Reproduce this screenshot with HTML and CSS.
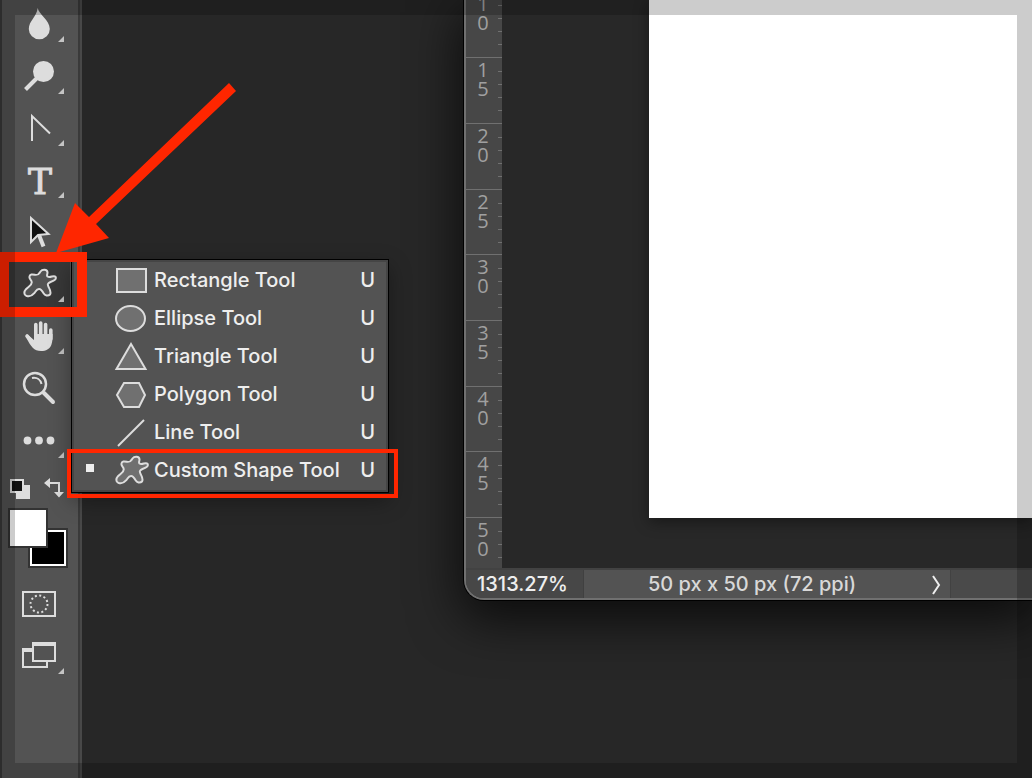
FILE: index.html
```html
<!DOCTYPE html>
<html lang="en">

<head>
  <meta charset="UTF-8">
  <title>Custom Shape Tool</title>
  <link rel="stylesheet" href="styles.css">
</head>

<body>
  <svg class="defs" aria-hidden="true">
    <symbol id="blob" viewBox="0 0 36 30">
      <path d="M18.500 3.500C20.300 1 25.200 1 25.500 4.300C25.600 6.800 23.800 8 26.300 8.900C29 9.600 32 6.800 33.600 8.900C34.800 11.600 31.500 12.900 28.500 14C25.500 15.200 25.300 16.500 26.600 19C28.200 22 29.500 24.200 28 26.500C26 28.500 23 27.600 21.600 25.200C20 22.300 19 20.800 17 20.900C14.500 21.100 14 23.200 12.300 25.200C10.200 27.600 6.800 28.900 4.300 27.800C1.500 26.500 2 23.500 4 21.200C6.500 18.500 10 17.500 9.700 14.200C9.500 11.800 7.300 11.300 7.400 9C7.500 6 10.500 6.200 12.800 6.700C16.500 7.500 16.800 5.800 18.500 3.500Z" />
    </symbol>
  </svg>

  <div class="workspace">
    <nav class="toolbar">
      <button class="tool more" aria-label="Blur">
        <svg viewBox="2 0 76 52"><path class="fill" d="M37.700 10C38.500 16 49.800 22 49.800 31A10.500 10.300 0 0 1 28.800 31C28.800 23 36.500 19 37.700 10Z" /></svg>
      </button>
      <button class="tool more" aria-label="Dodge">
        <svg viewBox="2 0 76 52"><circle class="fill" cx="43.500" cy="21.500" r="10.500" /><path class="line" stroke-width="4" d="M38 27L25.500 39.500" /></svg>
      </button>
      <button class="tool more" aria-label="Pen">
        <svg viewBox="2 0 76 52"><path class="line" stroke-width="2" d="M32 39V14L50 31.500" /></svg>
      </button>
      <button class="tool more" aria-label="Type">
        <svg viewBox="2 0 76 52"><text class="fill letter" x="40" y="40">T</text></svg>
      </button>
      <button class="tool more" aria-label="Path Selection">
        <svg viewBox="2 0 76 52"><path class="line" stroke-width="4" d="M39 29L43.500 40.500" /><path class="line" stroke-width="2" fill="#111" d="M31 12V36L38 29L48.500 28Z" /></svg>
      </button>
      <button class="tool more active" aria-label="Custom Shape">
        <svg viewBox="2 0 76 52"><use class="shape" href="#blob" x="22" y="10" width="36" height="30" /></svg>
      </button>
      <button class="tool more" aria-label="Hand">
        <svg viewBox="2 0 76 52">
          <path class="line round" stroke-width="3.600" d="M35.800 27V14.500M40.700 26V13M45.600 27V14.500M50.800 29V20M27 26L33 33" />
          <path class="fill" d="M34 24H52.600C52.600 33 52 41 41 41C34 41 31 37 26 27L28 25L34 30Z" />
        </svg>
      </button>
      <button class="tool" aria-label="Zoom">
        <svg viewBox="2 0 76 52"><circle class="line" stroke-width="2.500" cx="35" cy="22" r="11" /><path class="line" stroke-width="2" d="M32 16C37 15 40.500 18 41.500 22" /><path class="line round" stroke-width="4" d="M44 31L53 40" /></svg>
      </button>
      <button class="tool more" aria-label="Edit Toolbar">
        <svg viewBox="2 0 76 52"><circle class="fill" cx="27.500" cy="26.500" r="3.900" /><circle class="fill" cx="39" cy="26.500" r="3.900" /><circle class="fill" cx="50.500" cy="26.500" r="3.900" /></svg>
      </button>

      <div class="colors">
        <button class="mini" aria-label="Default colors">
          <svg viewBox="0 0 20 20"><path class="fill" d="M6 6H20V20H6Z" /><path fill="#111" stroke="#ddd" stroke-width="2" d="M1 1H13V13H1Z" /></svg>
        </button>
        <button class="mini" aria-label="Switch colors">
          <svg viewBox="0 0 20 20"><path class="line" stroke-width="2" d="M5 4H15V14" /><path class="fill" d="M0 4L6 -1V9ZM10 13H20L15 18.500Z" /></svg>
        </button>
      </div>
      <div class="swatches">
        <button class="swatch back" aria-label="Background color"></button>
        <button class="swatch front" aria-label="Foreground color"></button>
      </div>

      <button class="tool" aria-label="Quick Mask">
        <svg viewBox="2 0 76 52"><path class="line" stroke-width="2" d="M23 14H55V38H23Z" /><circle class="line" stroke-width="2" stroke-dasharray="2 2.450" cx="39" cy="26" r="8.500" /></svg>
      </button>
      <button class="tool more" aria-label="Screen Mode">
        <svg viewBox="2 0 76 52"><path class="line" stroke-width="2" d="M33 19H23V37H47V32" /><path class="fill" d="M22 18H33V22H22Z" /><path class="line" stroke-width="2" d="M33 13H55V31H33Z" /><path class="fill" d="M32 12H56V16H32Z" /></svg>
      </button>
    </nav>

    <main class="desk">
      <section class="document">
        <div class="view">
          <ol class="ruler">
            <li>1<br>0</li>
            <li>1<br>5</li>
            <li>2<br>0</li>
            <li>2<br>5</li>
            <li>3<br>0</li>
            <li>3<br>5</li>
            <li>4<br>0</li>
            <li>4<br>5</li>
            <li>5<br>0</li>
          </ol>
          <div class="canvas">
            <div class="artboard"></div>
          </div>
        </div>
        <footer class="status">
          <span class="percent">1313.27%</span>
          <button class="info">
            <span>50 px x 50 px (72 ppi)</span>
            <svg class="chevron" viewBox="0 0 10 20"><path d="M2 2L8 11L2 20" /></svg>
          </button>
        </footer>
      </section>
    </main>

    <div class="menu" role="menu">
      <button class="item" role="menuitem">
        <svg class="icon" viewBox="0 0 36 30"><path class="shape" d="M3 4H32V27H3Z" /></svg>
        <span>Rectangle Tool</span><kbd>U</kbd>
      </button>
      <button class="item" role="menuitem">
        <svg class="icon" viewBox="0 0 36 30"><ellipse class="shape" cx="16.500" cy="15.500" rx="14.500" ry="12.500" /></svg>
        <span>Ellipse Tool</span><kbd>U</kbd>
      </button>
      <button class="item" role="menuitem">
        <svg class="icon" viewBox="0 0 36 30"><path class="shape" d="M17 3L31.500 28H2.500Z" /></svg>
        <span>Triangle Tool</span><kbd>U</kbd>
      </button>
      <button class="item" role="menuitem">
        <svg class="icon" viewBox="0 0 36 30"><path class="shape" d="M10 4H25L31 16L25 28H10L3 16Z" /></svg>
        <span>Polygon Tool</span><kbd>U</kbd>
      </button>
      <button class="item" role="menuitem">
        <svg class="icon" viewBox="0 0 36 30"><path class="shape" d="M4 29L30 3" /></svg>
        <span>Line Tool</span><kbd>U</kbd>
      </button>
      <button class="item current" role="menuitem">
        <svg class="icon" viewBox="0 0 36 30"><use class="shape" href="#blob" width="36" height="30" /></svg>
        <span>Custom Shape Tool</span><kbd>U</kbd>
      </button>
    </div>

    <!-- callouts -->
    <div class="mark mark-tool"></div>
    <div class="mark mark-item"></div>
    <svg class="arrow" viewBox="0 0 184 172"><path d="M174 2L181 10L41 143L54 157L1 172L20 122L34 136Z" /></svg>
  </div>
</body>

</html>
```

FILE: styles.css
```css
* {
  box-sizing: border-box;
}

body {
  margin: 0;
  background: #272727;
  color: #eee;
  font: 500 20px/24px Inter, "Liberation Sans", sans-serif;
  overflow: hidden;
}

button {
  padding: 0;
  border: none;
  background: none;
  color: inherit;
  font: inherit;
}

svg {
  display: block;
}

.defs {
  position: absolute;
  width: 0;
  height: 0;
}

.workspace {
  display: flex;
  position: relative;
  height: 100vh;
  overflow: hidden;
}

/* darker band round the edge of the screen */
.workspace::after {
  content: "";
  position: absolute;
  inset: 0;
  border: 15px solid rgba(0, 0, 0, 0.2);
  pointer-events: none;
}

/* toolbar */
.toolbar {
  display: flex;
  flex-direction: column;
  flex: none;
  width: 82px;
  margin-top: -2px;
  background: #535353;
  border-left: 2px solid #393939;
  border-right: 2px solid #484848;
  box-shadow: inset -2px 0 #3a3a3a;
}

.tool {
  position: relative;
  width: 76px;
  height: 52px;
}

.tool svg {
  width: 76px;
  height: 52px;
}

.tool.more::after {
  content: "";
  position: absolute;
  left: 56px;
  top: 38px;
  border: 3px solid transparent;
  border-right-color: #c4c4c4;
  border-bottom-color: #c4c4c4;
}

.active {
  background: linear-gradient(#383838, #383838) 0 4px / 68px 45px no-repeat;
}

.fill {
  fill: #ddd;
}

.line {
  fill: none;
  stroke: #ddd;
}

path[fill="#111"] {
  fill: #111;
}

.round {
  stroke-linecap: round;
}

.letter {
  font: 36px "DejaVu Serif", serif;
  text-anchor: middle;
  stroke: #ddd;
  stroke-width: 1;
}

.shape {
  fill: #707070;
  stroke: #ddd;
  stroke-width: 2;
}

.active .shape {
  fill: #535353;
}

.colors {
  display: flex;
  gap: 14px;
  padding: 13px 8px 9px;
}

.mini,
.mini svg {
  width: 20px;
  height: 20px;
  overflow: visible;
}

.swatches {
  position: relative;
  width: 60px;
  height: 60px;
  margin: 0 0 10px 6px;
}

.swatch {
  position: absolute;
  width: 40px;
  height: 40px;
  border: 2px solid #333;
}

.front {
  top: 0;
  left: 0;
  background: #fff;
}

.back {
  right: 0;
  bottom: 0;
  background: #000;
  box-shadow: inset 0 0 0 2px #fff;
}

/* document window */
.desk {
  flex: 1;
  padding-left: 382px;
}

.document {
  height: 600px;
  border: 2px solid #707070;
  border-width: 0 0 2px 2px;
  border-bottom-left-radius: 20px;
  background: #474747;
  box-shadow: 0 0 0 1px #000, 0 16px 50px 4px rgba(0, 0, 0, 0.7);
  overflow: hidden;
}

.view {
  display: flex;
  height: 568px;
  overflow: hidden;
}

.ruler {
  flex: none;
  width: 36px;
  margin: -9px 0 0;
  padding: 0;
  list-style: none;
  color: #a0a0a0;
  font: 20px/19px "Open Sans", sans-serif;
  text-align: center;
}

.ruler li {
  position: relative;
  height: 66px;
  padding-top: 2px;
  padding-right: 2px;
  border-top: 1px solid #707070;
}

.ruler li:nth-child(3n+4) {
  height: 65px;
}

.ruler li::after {
  content: "";
  position: absolute;
  top: 1px;
  right: 0;
  width: 4px;
  height: 52px;
  background: repeating-linear-gradient(transparent 0 12px, #707070 12px 13px);
}

.canvas {
  flex: 1;
  padding: 0 0 50px 147px;
  background: #282828;
}

.artboard {
  height: 518px;
  background: #fff;
  box-shadow: 0 4px 14px rgba(0, 0, 0, 0.4);
}

.status {
  display: flex;
  height: 30px;
  border-top: 2px solid #424242;
  background: #4a4a4a;
}

.percent {
  width: 118px;
  padding: 2px 0 0 11px;
  background: #474747;
  border-right: 1px solid #404040;
}

.info {
  display: flex;
  align-items: center;
  justify-content: space-between;
  width: 367px;
  padding: 0 9px 0 64px;
  background: #535353;
  border-right: 1px solid #424242;
  color: #d8d8d8;
}

.chevron {
  width: 10px;
  height: 20px;
  fill: none;
  stroke: #eee;
  stroke-width: 2;
  overflow: visible;
}

/* flyout menu */
.menu {
  position: absolute;
  left: 71px;
  top: 259px;
  width: 318px;
  padding: 2px;
  border: 1px solid #000;
  background: #535353;
  box-shadow: inset 0 0 0 2px #454545, 0 8px 20px rgba(0, 0, 0, 0.35);
}

.item {
  display: flex;
  align-items: center;
  position: relative;
  width: 100%;
  height: 38px;
  padding: 0 11px 2px 40px;
  text-align: left;
}

.icon {
  width: 36px;
  height: 30px;
  margin-right: 4px;
}

.item span {
  flex: 1;
}

kbd {
  font: inherit;
}

.current::before {
  content: "";
  position: absolute;
  left: 12px;
  top: 12px;
  width: 8px;
  height: 8px;
  background: #eee;
}

/* callouts */
.mark {
  position: absolute;
  border: 4px solid #ff2600;
}

.mark-tool {
  left: -1px;
  top: 252px;
  width: 88px;
  height: 65px;
  border-width: 10px;
}

.mark-item {
  left: 67px;
  top: 449px;
  width: 331px;
  height: 49px;
}

.arrow {
  position: absolute;
  left: 55px;
  top: 81px;
  width: 184px;
  height: 172px;
  fill: #ff2600;
}
```
